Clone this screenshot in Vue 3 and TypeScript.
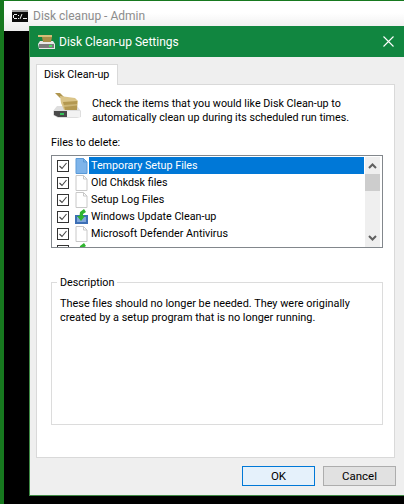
<script setup lang="ts">
interface Row { label: string; icon: 'page' | 'update'; selected?: boolean }
const rows: Row[] = [
  { label: 'Temporary Setup Files', icon: 'page', selected: true },
  { label: 'Old Chkdsk files', icon: 'page' },
  { label: 'Setup Log Files', icon: 'page' },
  { label: 'Windows Update Clean-up', icon: 'update' },
  { label: 'Microsoft Defender Antivirus', icon: 'page' },
  { label: '', icon: 'update' },
]
</script>

<template>
  <div class="desktop">
    <div class="console">
      <div class="console-title">
        <svg class="cmd-icon" width="16" height="12" viewBox="0 0 16 12">
          <rect x="0" y="0" width="16" height="12" fill="#0c0c0c" />
          <rect x="0" y="0" width="16" height="2" fill="#a0a0a0" />
          <rect x="2" y="4" width="3" height="1" fill="#eee" />
          <rect x="1" y="5" width="1" height="3" fill="#eee" />
          <rect x="2" y="8" width="3" height="1" fill="#eee" />
          <rect x="6" y="5" width="1" height="1" fill="#eee" />
          <rect x="6" y="8" width="1" height="1" fill="#eee" />
          <path d="M8 9 L10 4 M11 8.5 H15" stroke="#eee" stroke-width="1" fill="none" />
        </svg>
        <span>Disk cleanup - Admin</span>
      </div>
      <div class="console-body"></div>
    </div>

    <div class="dialog">
      <div class="dialog-title">
        <svg class="title-icon" width="17" height="14" viewBox="0 0 17 14">
          <path d="M2 6 L15 6 L17 9 L17 14 L1 14 L0 9 Z" fill="#e8e8e8" />
          <path d="M1 9 H16 V13 H1 Z" fill="#7a7a7a" />
          <rect x="11" y="10" width="3" height="2" fill="#45e060" />
          <path d="M0 0 H14 V2 H0 Z" fill="#d6bd78" />
          <path d="M4 2 H14 L13 7 H5 Z" fill="#a98e48" />
        </svg>
        <span class="dialog-title-text">Disk Clean-up Settings</span>
        <svg class="close" width="11" height="11" viewBox="0 0 11 11">
          <path d="M0.5 0.5 L10.5 10.5 M10.5 0.5 L0.5 10.5" stroke="#fff" stroke-width="1.1" />
        </svg>
      </div>

      <div class="dialog-content">
        <div class="tab">Disk Clean-up</div>
        <div class="panel">
          <div class="intro">
            <svg class="intro-icon" width="28" height="25" viewBox="0 0 28 25">
              <path d="M4 13 H24 L28 18 V24 L24 25 H5 L0 22 V18 Z" fill="#dedede" />
              <path d="M1 18 H14 V24 H5 L1 22 Z" fill="#4a4a4a" />
              <path d="M14 18 H27 V24 H14 Z" fill="#f2f2f2" />
              <rect x="7" y="20" width="4" height="2" fill="#35c35a" />
              <path d="M2 0 L7 0 L11 4 L7 5 Z" fill="#b0964f" />
              <path d="M7 3 L22 5 L25 8 L24 17 L11 17 L8 10 Z" fill="#dac488" />
              <path d="M10 9 L24 8 L24 17 L12 17 Z" fill="#b39850" />
              <path d="M11 12 L24 11 V12.5 L11 14 Z" fill="#ccb577" />
            </svg>
            <p class="intro-text">Check the items that you would like Disk Clean-up to<br />automatically clean up during its scheduled run times.</p>
          </div>

          <div class="files-label">Files to delete:</div>
          <div class="list">
            <div class="rows">
              <div v-for="row in rows" :key="row.icon + row.label" class="row">
                <svg class="check" width="12" height="12" viewBox="0 0 12 12">
                  <rect x="0.5" y="0.5" width="11" height="11" fill="#fff" stroke="#333" />
                  <path d="M2.5 6 L5 8.5 L9.5 3" fill="none" stroke="#444" stroke-width="1.1" />
                </svg>
                <svg v-if="row.icon === 'page'" class="file" width="12" height="16" viewBox="0 0 12 16">
                  <path d="M0.5 0.5 H8 L11.5 4 V15.5 H0.5 Z" :fill="row.selected ? '#7eb4ea' : '#fff'" :stroke="row.selected ? '#5a9ad8' : '#c8c8c8'" />
                  <path d="M8 0.5 V4 H11.5" fill="none" :stroke="row.selected ? '#5a9ad8' : '#c8c8c8'" />
                </svg>
                <svg v-else class="file" width="13" height="16" viewBox="0 0 13 16">
                  <rect x="0" y="6" width="13" height="9" fill="#3d6fb5" />
                  <path d="M2 8 L11 8 L11 13 L2 13 Z" fill="#7fa6da" />
                  <path d="M9 0 L11 3 L8 5 L8 7 L10 7 L6 12 L2 7 L4.5 7 L5 3 Z" fill="#2fb52f" />
                </svg>
                <span class="label" :class="{ selected: row.selected }">{{ row.label }}</span>
              </div>
            </div>
            <div class="scrollbar">
              <svg width="15" height="17" viewBox="0 0 15 17">
                <path d="M4 11 L7.5 7.5 L11 11" fill="none" stroke="#606060" stroke-width="2" />
              </svg>
              <div class="thumb"></div>
              <div class="track"></div>
              <svg width="15" height="17" viewBox="0 0 15 17">
                <path d="M4 6 L7.5 9.5 L11 6" fill="none" stroke="#606060" stroke-width="2" />
              </svg>
            </div>
          </div>

          <fieldset class="description">
            <legend>Description</legend>
            <p>These files should no longer be needed. They were originally<br />created by a setup program that is no longer running.</p>
          </fieldset>
        </div>

        <div class="buttons">
          <button class="btn default" type="button">OK</button>
          <button class="btn" type="button">Cancel</button>
        </div>
      </div>
    </div>
  </div>
</template>

<style>
html, body { margin: 0; padding: 0; }
</style>

<style scoped>
.desktop {
  position: relative;
  width: 404px;
  height: 504px;
  overflow: hidden;
  background: #17791f;
  padding: 1px 0 0 4px;
  box-sizing: border-box;
  font-family: Roboto, "Noto Sans", sans-serif;
  font-size: 10.75px;
  color: #000;
}
.console {
  height: 503px;
  display: flex;
  flex-direction: column;
}
.console-title {
  height: 30px;
  flex: none;
  background: linear-gradient(#fff 0, #fff 12px, #ececec 100%);
  display: flex;
  align-items: flex-start;
  padding: 8px 0 0 8px;
  box-sizing: border-box;
  gap: 5px;
  color: #8c8c8c;
  font-size: 12px;
}
.cmd-icon { flex: none; margin-top: 1px; }
.console-body {
  flex: 1;
  background: #000;
}
.dialog {
  position: absolute;
  left: 29px;
  top: 26px;
  width: 375px;
  height: 470px;
  box-sizing: border-box;
  border-left: 1px solid #3f8a45;
  border-bottom: 1px solid #3f8a45;
  background: #efefef;
  display: flex;
  flex-direction: column;
}
.dialog-title {
  height: 31px;
  flex: none;
  background: #118640;
  color: #fff;
  display: flex;
  align-items: center;
  padding: 0 10px 0 8px;
  gap: 4px;
  font-size: 12px;
}
.dialog-title-text { flex: 1; }
.close { flex: none; }
.dialog-content {
  flex: 1;
  padding: 7px 9px 0 6px;
  display: flex;
  flex-direction: column;
}
.tab {
  width: 82px;
  height: 21px;
  box-sizing: border-box;
  background: #fff;
  border: 1px solid #d9d9d9;
  border-bottom: 0;
  padding-left: 7px;
  line-height: 19px;
  margin-bottom: -1px;
  position: relative;
  z-index: 1;
}
.panel {
  height: 374px;
  box-sizing: border-box;
  background: #fff;
  border: 1px solid #d9d9d9;
  padding: 7px 11px 0 14px;
}
.intro {
  display: flex;
  gap: 11px;
  height: 40px;
}
.intro-icon { flex: none; margin-left: 2px; margin-top: 1px; }
.intro-text {
  margin: 5px 0 0;
  line-height: 14px;
  white-space: nowrap;
}
.files-label {
  margin-top: 4px;
  line-height: 14px;
}
.list {
  margin-top: 5px;
  height: 93px;
  box-sizing: border-box;
  border: 1px solid #82878c;
  display: flex;
  padding: 1px 1px 0 0;
  overflow: hidden;
}
.rows { flex: 1; overflow: hidden; padding-left: 5px; }
.row {
  height: 17px;
  display: flex;
  align-items: center;
  white-space: nowrap;
}
.check { flex: none; }
.file { flex: none; margin-left: 6px; width: 13px; }
.label {
  margin-left: 1px;
  padding-left: 2px;
  height: 17px;
  line-height: 18px;
  flex: 1;
}
.label.selected {
  background: #0078d7;
  color: #fff;
}
.scrollbar {
  width: 15px;
  flex: none;
  margin-left: 1px;
  margin-right: 1px;
  background: #efefef;
  display: flex;
  flex-direction: column;
}
.scrollbar svg { flex: none; display: block; }
.thumb { height: 17px; flex: none; background: #cdcdcd; }
.track { flex: 1; }
.description {
  margin: 26px 0 0;
  padding: 7px 8px 0;
  height: 151px;
  box-sizing: border-box;
  border: 1px solid #dcdcdc;
  min-width: 0;
}
.description legend {
  padding: 2px 3px 0;
  margin-left: -3px;
  line-height: 14px;
}
.description p {
  margin: 0;
  line-height: 14px;
  white-space: nowrap;
  font-size: 10.9px;
}
.buttons {
  display: flex;
  justify-content: flex-end;
  gap: 8px;
  margin-top: 8px;
  margin-right: -1px;
}
.btn {
  width: 73px;
  height: 20px;
  box-sizing: border-box;
  border: 1px solid #adadad;
  background: #e1e1e1;
  font: inherit;
  font-size: 11.5px;
  padding: 0;
  color: #000;
}
.btn.default {
  border-color: #0078d7;
  background: #e5f1fb;
}
</style>
